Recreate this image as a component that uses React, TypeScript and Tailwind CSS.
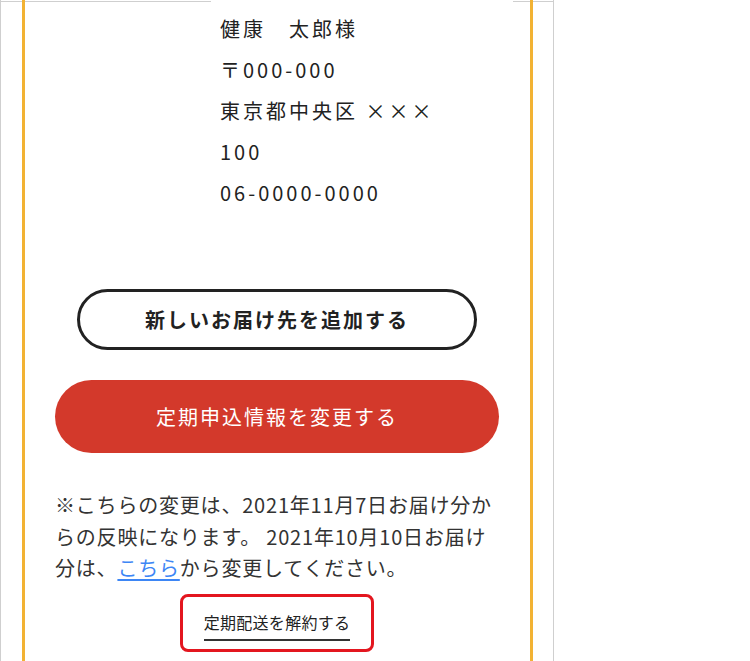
import React from "react";

export default function App() {
  const font = { fontFamily: '"Noto Sans CJK JP", "Noto Sans", sans-serif' };
  return (
    <div className="w-[750px] h-[661px] overflow-hidden bg-white text-[#222]" style={font}>
      <div className="relative w-[554px] h-[661px] border-l border-r border-[#cfcfcf] pl-[21px] pr-[20px]">
        <div className="absolute left-0 top-px h-px w-[210px] bg-[#cfcfcf]" />
        <div className="absolute left-[512px] top-px h-px w-[41px] bg-[#cfcfcf]" />
        <div className="relative h-full border-l-[3px] border-r-[3px] border-[#f2b233] pl-[30px] pr-[31px]">
          <div className="pt-[8px] pl-[165px] text-[20px] leading-[41px] tracking-[3px]">
            <p>健康　太郎様</p>
            <p>〒000-000</p>
            <p>東京都中央区 ×××</p>
            <p>100</p>
            <p>06-0000-0000</p>
          </div>
          <div className="mt-[76px] flex justify-center">
            <button className="w-[400px] h-[61px] rounded-full border-[3px] border-[#222] bg-white text-[20px] font-bold tracking-[2px] text-[#222]">
              新しいお届け先を追加する
            </button>
          </div>
          <button className="mt-[30px] w-full h-[73px] rounded-full bg-[#d3392b] text-white text-[20px] tracking-[2px]">
            定期申込情報を変更する
          </button>
          <p className="mt-[36px] text-[20px] leading-[31.5px] tracking-[0.8px] text-[#333]">
            ※こちらの変更は、2021年11月7日お届け分からの反映になります。 2021年10月10日お届け分は、
            <a className="text-[#3d86f5] underline underline-offset-[3px]">こちら</a>
            から変更してください。
          </p>
          <div className="mt-[10px] flex justify-center">
            <div className="w-[194px] h-[58px] rounded-[8px] border-[3px] border-[#e3161f] flex justify-center pt-[13px]">
              <span className="inline-block h-[31px] border-b-2 border-[#333] text-[16px] leading-[24px] tracking-[0.3px] pb-[5px] text-[#222]">
                定期配送を解約する
              </span>
            </div>
          </div>
        </div>
      </div>
    </div>
  );
}
